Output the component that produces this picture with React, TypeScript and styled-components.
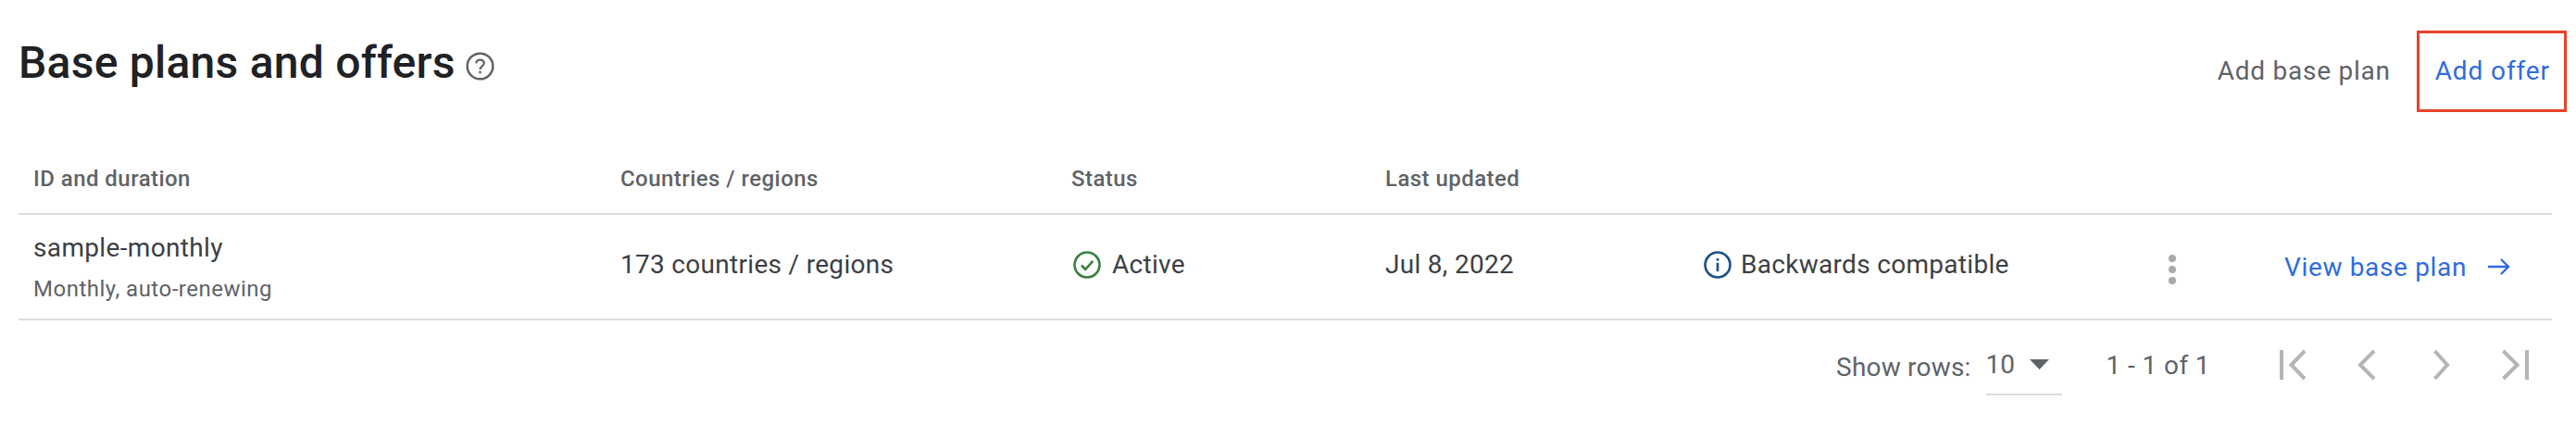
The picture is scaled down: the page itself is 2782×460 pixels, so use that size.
import * as React from 'react';
import styled, { createGlobalStyle } from 'styled-components';

const GlobalStyle = createGlobalStyle`
  html, body {
    margin: 0;
    padding: 0;
    background: #fff;
    font-family: Roboto, "Liberation Sans", sans-serif;
  }
`;

const colors = {
  ink: '#202124',
  text: '#3c4043',
  muted: '#5f6368',
  blue: '#2f6bdf',
  line: '#dadce0',
  disabled: '#b5b5b5',
  green: '#3b8042',
  navy: '#1c5187',
};

const Page = styled.div`
  width: 2782px;
  height: 460px;
  padding: 33px 10px 0 20px;
  box-sizing: border-box;
  overflow: hidden;
`;
const Header = styled.div`
  display: flex;
  align-items: flex-start;
  justify-content: space-between;
  height: 88px;
`;
const TitleGroup = styled.div`
  display: flex;
  align-items: center;
  gap: 11px;
  height: 70px;
`;
const Title = styled.h1`
  margin: 0;
  font-size: 48px;
  line-height: 70px;
  font-weight: 500;
  letter-spacing: 0.25px;
  color: ${colors.ink};
`;
const HelpWrap = styled.span`
  display: flex;
  margin-top: 6px;
`;
const Actions = styled.div`
  display: flex;
  align-items: flex-start;
  gap: 31px;
`;
const ActionButton = styled.button<{ $outlined?: boolean }>`
  box-sizing: border-box;
  height: 88px;
  padding: 0 15px 2px 17px;
  background: none;
  font-family: inherit;
  font-size: 28px;
  font-weight: 400;
  letter-spacing: ${p => (p.$outlined ? '0.9px' : '0.75px')};
  border: 3px solid ${p => (p.$outlined ? '#e8432a' : 'transparent')};
  color: ${p => (p.$outlined ? colors.blue : colors.muted)};
  margin-right: ${p => (p.$outlined ? '0' : '-21px')};
`;
const Table = styled.div`
  width: 2736px;
`;
const Row = styled.div<{ $height: number }>`
  display: grid;
  grid-template-columns: 634px 487px 339px 344px 502px 125px 1fr;
  align-items: center;
  box-sizing: border-box;
  height: ${p => p.$height}px;
  padding-left: 16px;
  border-bottom: 2px solid ${colors.line};
`;
const HeadCell = styled.div`
  margin-top: 34px;
  font-size: 24px;
  font-weight: 500;
  letter-spacing: 0.45px;
  color: ${colors.muted};
`;
const Cell = styled.div<{ $gap?: number; $indent?: number }>`
  display: flex;
  align-items: center;
  gap: ${p => p.$gap ?? 0}px;
  padding-left: ${p => p.$indent ?? 0}px;
  margin-top: -6px;
  font-size: 28px;
  letter-spacing: 0.3px;
  color: ${colors.text};
`;
const IdCell = styled.div`
  display: flex;
  flex-direction: column;
  gap: 12px;
  padding-top: 1px;
`;
const IdName = styled.div`
  font-size: 28px;
  line-height: 34px;
  letter-spacing: 0.35px;
  color: ${colors.text};
`;
const IdSub = styled.div`
  font-size: 24px;
  line-height: 30px;
  letter-spacing: 0.5px;
  color: ${colors.muted};
`;
const MoreDots = styled.div`
  display: flex;
  flex-direction: column;
  gap: 4px;
  width: 8px;
  margin-top: 6px;
`;
const Dot = styled.span`
  width: 8px;
  height: 8px;
  border-radius: 50%;
  background: #a9a9a9;
`;
const ViewLink = styled.a`
  display: flex;
  align-items: center;
  gap: 23px;
  font-size: 28px;
  font-weight: 400;
  letter-spacing: 0.65px;
  color: ${colors.blue};
`;
const Pagination = styled.div`
  display: flex;
  align-items: flex-start;
  justify-content: flex-end;
  height: 90px;
  padding-right: 20px;
  color: ${colors.muted};
`;
const RowsLabel = styled.span`
  font-size: 28px;
  line-height: 32px;
  margin-top: 35px;
  letter-spacing: 0.2px;
`;
const RowsSelect = styled.div`
  display: flex;
  align-items: flex-start;
  gap: 16px;
  box-sizing: border-box;
  width: 82px;
  height: 81px;
  margin-left: 16px;
  padding-top: 30px;
  font-size: 28px;
  line-height: 36px;
  border-bottom: 2px solid ${colors.line};
`;
const Range = styled.span`
  font-size: 28px;
  line-height: 36px;
  margin-top: 31px;
  margin-left: 48px;
  letter-spacing: 0.4px;
`;
const PagerIcons = styled.div`
  display: flex;
  align-items: center;
  gap: 44px;
  margin-left: 73px;
  margin-top: 30px;
`;
const StatusIcon = styled.svg`
  flex: none;
  margin-top: 2px;
`;

const HelpIcon = () => (
  <svg width="31" height="31" viewBox="0 0 30 30" fill="none">
    <circle cx="15" cy="15" r="13.4" stroke="#5f6368" strokeWidth="2.4" />
    <path d="M10.8 12c.3-2.4 2-3.6 4.2-3.6 2.4 0 4.1 1.5 4.1 3.5 0 2.9-3.7 3-4.1 6.3" stroke="#5f6368" strokeWidth="2.2" />
    <rect x="13.8" y="20" width="2.4" height="2.5" fill="#5f6368" />
  </svg>
);

const ActiveIcon = () => (
  <StatusIcon width="30" height="30" viewBox="0 0 32 32" fill="none">
    <circle cx="16" cy="16" r="14.4" stroke={colors.green} strokeWidth="2.8" />
    <path d="M9.5 16.5l4.6 4.6 8.6-9.4" stroke={colors.green} strokeWidth="2.8" />
  </StatusIcon>
);

const InfoIcon = () => (
  <StatusIcon width="30" height="30" viewBox="0 0 32 32" fill="none">
    <circle cx="16" cy="16" r="14.4" stroke={colors.navy} strokeWidth="2.8" />
    <rect x="14.6" y="8.5" width="2.8" height="2.8" fill={colors.navy} />
    <rect x="14.6" y="13.6" width="2.8" height="10" fill={colors.navy} />
  </StatusIcon>
);

const ArrowIcon = () => (
  <svg width="24" height="18" viewBox="0 0 24 18" fill="none">
    <path d="M0 9h22M14 1l8 8-8 8" stroke={colors.blue} strokeWidth="2.4" />
  </svg>
);

const CaretIcon = () => (
  <svg width="21" height="11" viewBox="0 0 21 11" style={{ marginTop: 12 }}>
    <path d="M0 0h21L10.5 11z" fill={colors.muted} />
  </svg>
);

const PagerIcon = ({ d }: { d: string }) => (
  <svg width="36" height="36" viewBox="0 0 36 36" fill="none">
    <path d={d} stroke={colors.disabled} strokeWidth="4" />
  </svg>
);

function App() {
  return (
    <Page>
      <GlobalStyle />
      <Header>
        <TitleGroup>
          <Title>Base plans and offers</Title>
          <HelpWrap>
            <HelpIcon />
          </HelpWrap>
        </TitleGroup>
        <Actions>
          <ActionButton>Add base plan</ActionButton>
          <ActionButton $outlined>Add offer</ActionButton>
        </Actions>
      </Header>
      <Table>
        <Row $height={111}>
          <HeadCell>ID and duration</HeadCell>
          <HeadCell>Countries / regions</HeadCell>
          <HeadCell>Status</HeadCell>
          <HeadCell>Last updated</HeadCell>
        </Row>
        <Row $height={114}>
          <IdCell>
            <IdName>sample-monthly</IdName>
            <IdSub>Monthly, auto-renewing</IdSub>
          </IdCell>
          <Cell>173 countries / regions</Cell>
          <Cell $gap={12} $indent={2}>
            <ActiveIcon />
            Active
          </Cell>
          <Cell>Jul 8, 2022</Cell>
          <Cell $gap={10}>
            <InfoIcon />
            Backwards compatible
          </Cell>
          <MoreDots>
            <Dot />
            <Dot />
            <Dot />
          </MoreDots>
          <ViewLink>
            View base plan
            <ArrowIcon />
          </ViewLink>
        </Row>
        <Pagination>
          <RowsLabel>Show rows:</RowsLabel>
          <RowsSelect>
            10
            <CaretIcon />
          </RowsSelect>
          <Range>1 - 1 of 1</Range>
          <PagerIcons>
            <PagerIcon d="M4 2v32M29 3L14.5 18 29 33" />
            <PagerIcon d="M24 3L9 18l15 15" />
            <PagerIcon d="M9.5 3L23 18 9.5 33" />
            <PagerIcon d="M29 2v32M3.5 3l15 15-15 15" />
          </PagerIcons>
        </Pagination>
      </Table>
    </Page>
  );
}

export default App;
